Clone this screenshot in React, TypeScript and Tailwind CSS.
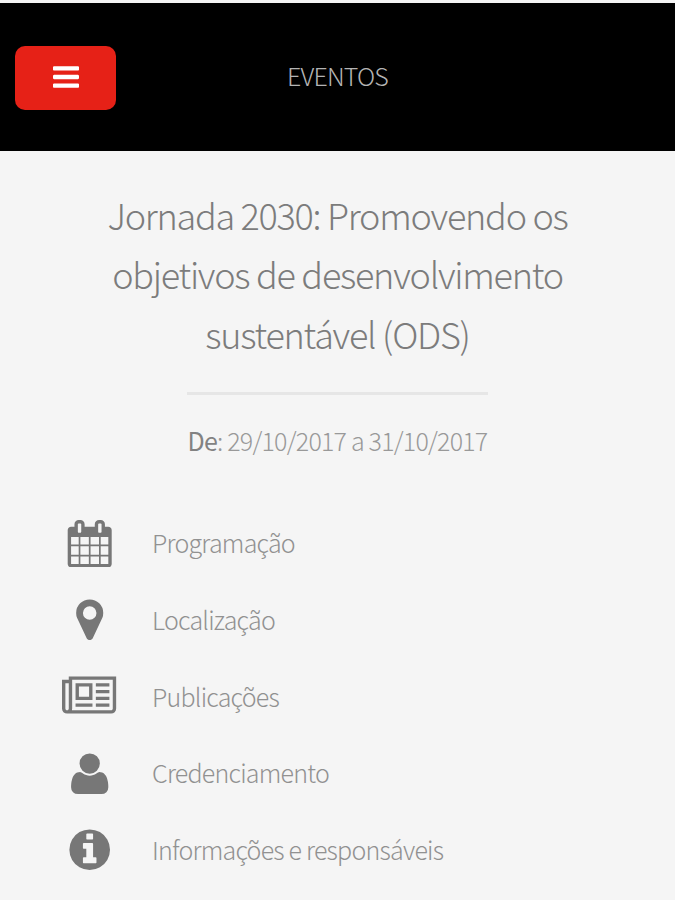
import type { ReactNode } from "react";

type IconProps = { viewBox: string; d: string; className: string };

function Icon({ viewBox, d, className }: IconProps) {
  return (
    <svg viewBox={viewBox} className={className} fill="currentColor" aria-hidden="true">
      <path d={d} />
    </svg>
  );
}

const BARS =
  "M1664 1344v128q0 26-19 45t-45 19h-1408q-26 0-45-19t-19-45v-128q0-26 19-45t45-19h1408q26 0 45 19t19 45zm0-512v128q0 26-19 45t-45 19h-1408q-26 0-45-19t-19-45v-128q0-26 19-45t45-19h1408q26 0 45 19t19 45zm0-512v128q0 26-19 45t-45 19h-1408q-26 0-45-19t-19-45v-128q0-26 19-45t45-19h1408q26 0 45 19t19 45z";

const ITEMS = [
  {
    label: "Programação",
    viewBox: "0 0 1792 1792",
    d: "M192 1664h288v-288h-288v288zm352 0h320v-288h-320v288zm-352-352h288v-320h-288v320zm352 0h320v-320h-320v320zm-352-384h288v-288h-288v288zm736 736h320v-288h-320v288zm-384-736h320v-288h-320v288zm768 736h288v-288h-288v288zm-384-352h320v-320h-320v320zm-352-864v-288q0-13-9.5-22.5t-22.5-9.5h-64q-13 0-22.5 9.5t-9.5 22.5v288q0 13 9.5 22.5t22.5 9.5h64q13 0 22.5-9.5t9.5-22.5zm736 864h288v-320h-288v320zm-384-384h320v-288h-320v288zm384 0h288v-288h-288v288zm32-480v-288q0-13-9.5-22.5t-22.5-9.5h-64q-13 0-22.5 9.5t-9.5 22.5v288q0 13 9.5 22.5t22.5 9.5h64q13 0 22.5-9.5t9.5-22.5zm384-64v1280q0 52-38 90t-90 38h-1408q-52 0-90-38t-38-90v-1280q0-52 38-90t90-38h128v-96q0-66 47-113t113-47h64q66 0 113 47t47 113v96h384v-96q0-66 47-113t113-47h64q66 0 113 47t47 113v96h128q52 0 90 38t38 90z",
  },
  {
    label: "Localização",
    viewBox: "0 0 1792 1792",
    d: "M1152 640q0-106-75-181t-181-75-181 75-75 181 75 181 181 75 181-75 75-181zm256 0q0 109-33 179l-364 774q-16 33-47.5 52t-67.5 19-67.5-19-46.5-52l-365-774q-33-70-33-179 0-212 150-362t362-150 362 150 150 362z",
  },
  {
    label: "Publicações",
    viewBox: "0 0 2048 1792",
    d: "M1024 512h-384v384h384v-384zm128 640v128h-640v-128h640zm0-768v640h-640v-640h640zm640 768v128h-512v-128h512zm0-256v128h-512v-128h512zm0-256v128h-512v-128h512zm0-256v128h-512v-128h512zm-1536 960v-960h-128v960q0 26 19 45t45 19 45-19 19-45zm1664 0v-1088h-1536v1088q0 33-11 64h1483q26 0 45-19t19-45zm128-1216v1216q0 80-56 136t-136 56h-1664q-80 0-136-56t-56-136v-1088h256v-128h1792z",
  },
  {
    label: "Credenciamento",
    viewBox: "0 0 1792 1792",
    d: "M1600 1405q0 120-73 189.5t-194 69.5h-874q-121 0-194-69.5t-73-189.5q0-53 3.5-103.5t14-109 26.5-108.5 43-97.5 62-81 85.5-53.5 111.5-20q9 0 42 21.5t74.5 48 108 48 133.5 21.5 133.5-21.5 108-48 74.5-48 42-21.5q61 0 111.5 20t85.5 53.5 62 81 43 97.5 26.5 108.5 14 109 3.5 103.5zm-320-893q0 159-112.5 271.5t-271.5 112.5-271.5-112.5-112.5-271.5 112.5-271.5 271.5-112.5 271.5 112.5 112.5 271.5z",
  },
  {
    label: "Informações e responsáveis",
    viewBox: "0 0 1792 1792",
    d: "M1152 1376v-160q0-14-9-23t-23-9h-96v-512q0-14-9-23t-23-9h-320q-14 0-23 9t-9 23v160q0 14 9 23t23 9h96v320h-96q-14 0-23 9t-9 23v160q0 14 9 23t23 9h448q14 0 23-9t9-23zm-128-896v-160q0-14-9-23t-23-9h-192q-14 0-23 9t-9 23v160q0 14 9 23t23 9h192q14 0 23-9t9-23zm640 416q0 209-103 385.5t-279.5 279.5-385.5 103-385.5-103-279.5-279.5-103-385.5 103-385.5 279.5-279.5 385.5-103 385.5 103 279.5 279.5 103 385.5z",
  },
];

function Line({ children }: { children: ReactNode }) {
  return <span className="block whitespace-nowrap">{children}</span>;
}

export default function App() {
  return (
    <div className="h-[900px] w-[675px] overflow-hidden bg-[#f5f5f5] pt-[3px] font-['Noto_Sans_CJK_JP','Noto_Sans_CJK_SC','Open_Sans',sans-serif] font-light text-[#777]">
      <header className="grid h-[148px] grid-cols-[1fr_auto_1fr] items-center bg-black px-[15px]">
        <button className="mt-0.5 flex h-16 w-[101px] items-center justify-center justify-self-start rounded-[10px] bg-[#e62117] pb-0.5 text-white" aria-label="Menu">
          <Icon viewBox="128 256 1536 1280" d={BARS} className="h-[22px] w-[26px]" />
        </button>
        <h1 className="pb-[5px] text-[25px] leading-8 tracking-[-0.8px] text-[#b4b4b4]">EVENTOS</h1>
      </header>

      <main>
        <h2 className="pt-[34px] text-center text-[36px] leading-[59.3px] tracking-[-1.26px] text-[#7c7c7c]">
          <Line>Jornada 2030: Promovendo os</Line>
          <Line>objetivos de desenvolvimento</Line>
          <Line>sustentável (ODS)</Line>
        </h2>
        <hr className="mx-auto mt-[29.6px] w-[301px] border-t-[3px] border-[#e6e6e6]" />
        <p className="mt-[29px] text-center text-[25px] leading-8 tracking-[-0.78px] text-[#999]">
          <strong className="font-normal text-[#828282]">De</strong>: 29/10/2017 a 31/10/2017
        </p>
        <ul className="mt-12">
          {ITEMS.map((item) => (
            <li key={item.label} className="flex h-[76.7px] items-center pl-[62px]">
              <span className="flex w-[55px] justify-center pt-px">
                <Icon viewBox={item.viewBox} d={item.d} className="h-[47.4px] w-auto" />
              </span>
              <span className="ml-[35px] whitespace-nowrap pb-px text-[25px] leading-8 tracking-[-0.78px] text-[#919191]">{item.label}</span>
            </li>
          ))}
        </ul>
      </main>
    </div>
  );
}
